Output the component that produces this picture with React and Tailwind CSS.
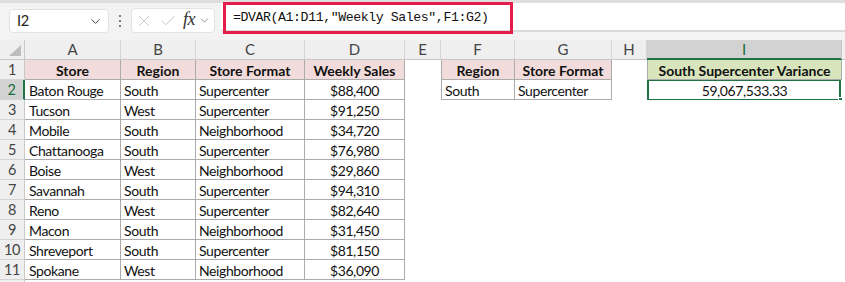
import { ChevronDown, X, Check } from "lucide-react";

const rows = [
  ["Baton Rouge", "South", "Supercenter", "$88,400"],
  ["Tucson", "West", "Supercenter", "$91,250"],
  ["Mobile", "South", "Neighborhood", "$34,720"],
  ["Chattanooga", "South", "Supercenter", "$76,980"],
  ["Boise", "West", "Neighborhood", "$29,860"],
  ["Savannah", "South", "Supercenter", "$94,310"],
  ["Reno", "West", "Supercenter", "$82,640"],
  ["Macon", "South", "Neighborhood", "$31,450"],
  ["Shreveport", "South", "Supercenter", "$81,150"],
  ["Spokane", "West", "Neighborhood", "$36,090"],
];

const cols = ["A", "B", "C", "D", "E", "F", "G", "H", "I"];

const cell = "h-[20px] flex items-center overflow-hidden whitespace-nowrap pt-[1px]";
const tb = "border-r border-b border-[#ababab]";
const head = " justify-center font-bold text-[14px] tracking-[0px] ";

function RowHead({ n, active }) {
  return (
    <div
      className={
        "h-[20px] flex items-center justify-center text-[14.5px] tracking-[-0.3px] border-b border-[#d4d4d4] " +
        (active
          ? "bg-[#d2d2d2] text-[#1a6b3c] border-r-2 border-r-[#217346]"
          : "bg-[#efefef] text-[#444] border-r border-r-[#c8c8c8]")
      }
    >
      {n}
    </div>
  );
}

function FormulaBar() {
  return (
    <div className="h-[40px] bg-[#f3f3f3] border-t-[3px] border-[#dedede] flex items-start">
      <div className="ml-[9px] mt-[6px] w-[100px] h-[24px] bg-white rounded-[4px] border border-[#e3e3e3] flex items-center justify-between pl-[7px] pr-[5px]">
        <span className="text-[14.5px] text-[#222]">I2</span>
        <ChevronDown size={15} strokeWidth={1.6} className="text-[#444]" />
      </div>
      <div className="w-[22px] mt-[12px] flex flex-col items-center gap-[3px]">
        <span className="w-[2px] h-[2px] bg-[#555] rounded-full" />
        <span className="w-[2px] h-[2px] bg-[#555] rounded-full" />
        <span className="w-[2px] h-[2px] bg-[#555] rounded-full" />
      </div>
      <div className="mt-[5px] w-[84px] h-[25px] bg-white rounded-[4px] border border-[#e3e3e3] flex items-center pl-[3px] gap-[6px]">
        <X size={18} strokeWidth={1.3} className="text-[#c4c4c4]" />
        <Check size={18} strokeWidth={1.3} className="text-[#c4c4c4]" />
        <span className="font-['Liberation_Serif',serif] italic text-[18px] text-[#333] leading-none -mt-[3px]">
          fx
        </span>
        <ChevronDown size={13} strokeWidth={1.5} className="text-[#777] -ml-[3px]" />
      </div>
      <div className="ml-[6px] flex-1 h-[29px] bg-white border-b-2 border-[#dadada] rounded-bl-[4px]">
        <div className="ml-[2px] -mt-[1px] w-[290px] h-[32px] border-[3px] border-[#e31c4c] flex items-center pl-[7px] font-['Liberation_Mono',monospace] text-[13.2px] text-[#111]">
          =DVAR(A1:D11,"Weekly Sales",F1:G2)
        </div>
      </div>
    </div>
  );
}

export default function App() {
  return (
    <div className="w-[845px] h-[282px] overflow-hidden bg-white font-['Lato',sans-serif] text-[14px] tracking-[-0.4px] text-[#111]">
      <FormulaBar />
      <div className="grid grid-cols-[25px_96px_75px_109px_100px_36px_74px_97px_35px_195px_1fr]">
        {/* column header row */}
        <div className="h-[20px] bg-[#efefef] border-r border-b border-[#c8c8c8] flex items-end justify-end pr-[3px] pb-[3px]">
          <svg width="12" height="11" viewBox="0 0 12 11">
            <polygon points="12,0 12,11 0,11" fill="#bdbdbd" />
          </svg>
        </div>
        {cols.map((c) => (
          <div
            key={c}
            className={
              "h-[20px] flex items-center justify-center text-[15px] tracking-[0px] border-r " +
              (c === "I"
                ? "bg-[#d2d2d2] text-[#1a6b3c] border-r-[#c8c8c8] border-b-2 border-b-[#217346]"
                : "bg-[#efefef] text-[#444] border-[#d4d4d4] border-b border-b-[#c8c8c8]")
            }
          >
            {c}
          </div>
        ))}
        <div className="h-[20px] bg-[#efefef] border-b border-[#c8c8c8]" />

        {/* row 1 */}
        <RowHead n={1} />
        {["Store", "Region", "Store Format", "Weekly Sales"].map((h) => (
          <div key={h} className={cell + head + "bg-[#f2dcdb] " + tb}>
            {h}
          </div>
        ))}
        <div className={cell} />
        <div className={cell + head + "bg-[#f2dcdb] border-l " + tb}>Region</div>
        <div className={cell + head + "bg-[#f2dcdb] " + tb}>Store Format</div>
        <div className={cell} />
        <div className={cell + head + "bg-[#d8e4bc] border-l " + tb}>
          South Supercenter Variance
        </div>
        <div className={cell} />

        {rows.map((r, i) => {
          const n = i + 2;
          return [
            <RowHead key={"h" + n} n={n} active={n === 2} />,
            <div key={"a" + n} className={cell + " pl-[4px] " + tb}>{r[0]}</div>,
            <div key={"b" + n} className={cell + " pl-[3px] " + tb}>{r[1]}</div>,
            <div key={"c" + n} className={cell + " pl-[3px] " + tb}>{r[2]}</div>,
            <div key={"d" + n} className={cell + " justify-center " + tb}>{r[3]}</div>,
            <div key={"e" + n} className={cell} />,
            n === 2 ? (
              <div key={"f" + n} className={cell + " pl-[3px] border-l " + tb}>South</div>
            ) : (
              <div key={"f" + n} className={cell} />
            ),
            n === 2 ? (
              <div key={"g" + n} className={cell + " pl-[3px] " + tb}>Supercenter</div>
            ) : (
              <div key={"g" + n} className={cell} />
            ),
            <div key={"hh" + n} className={cell} />,
            n === 2 ? (
              <div key={"i" + n} className={cell + " justify-center relative"}>
                59,067,533.33
                <div className="absolute -top-[1px] -bottom-[1px] left-0 right-[1px] border-2 border-[#217346]" />
                <div className="absolute -bottom-[3px] -right-[2px] w-[6px] h-[6px] bg-[#217346] border border-white" />
              </div>
            ) : (
              <div key={"i" + n} className={cell} />
            ),
            <div key={"z" + n} className={cell} />,
          ];
        })}

        {/* row 12, only its top edge is in view */}
        <div className="h-[20px] bg-[#efefef] border-r border-[#c8c8c8]" />
      </div>
    </div>
  );
}
